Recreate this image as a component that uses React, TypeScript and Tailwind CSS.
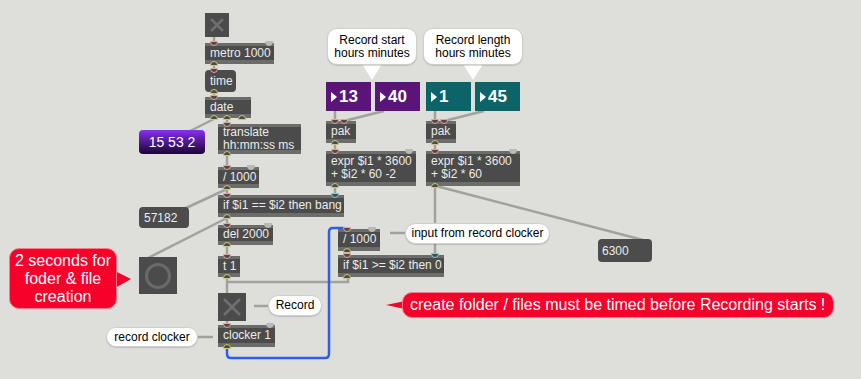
import React from 'react';

// Max patcher view. The canvas is free-form, so the object chains are
// stacked with flex columns and the odd loose nodes are pinned in place.

type Port = { c: string; kind?: 'hot' | 'cold' | 'grey' };

interface ObjProps {
    className: string;
    lines: string[];
    inlets?: Port[];
    outlets?: string[];
    rounded?: boolean;
    strips?: boolean;
}

const inletColor = {
    hot: 'border-[#e3a49c] bg-[#4a4b4a]',
    cold: 'border-[#86c9d3] bg-[#4a4b4a]',
    grey: 'border-[#b9bab8] bg-[#b9bab8]',
};

const Obj: React.FC<ObjProps> = ({ className, lines, inlets = [{ c: 'left-[5px]' }], outlets = ['left-[5px]'], rounded, strips = true }) => (
    <div className={`shrink-0 ${className}`}>
        <div
            className={`w-full h-full bg-[#4a4b4a] flex flex-col justify-center pl-[5px] text-[12px] leading-[13px] text-[#ececec] ${rounded ? 'rounded-[4px]' : ''} ${strips ? 'border-t-[3px] border-b-[4px] border-[#6c6d6b]' : ''}`}
        >
            {lines.map(l => (
                <div key={l} className="whitespace-pre">{l}</div>
            ))}
        </div>
        {inlets.map(p => (
            <div key={p.c} className={`absolute top-[-2px] w-[8px] h-[5px] rounded-b-full border ${inletColor[p.kind || 'hot']} ${p.c}`} />
        ))}
        {outlets.map(o => (
            <div key={o} className={`absolute bottom-[-2px] w-[8px] h-[5px] rounded-t-full border border-[#c9c77e] bg-[#4a4b4a] ${o}`} />
        ))}
    </div>
);

const NumBox: React.FC<{ v: string; teal?: boolean }> = ({ v, teal }) => (
    <div
        className={`w-[45px] h-[29px] flex items-center pl-[5px] gap-[2px] text-white text-[17px] font-bold ${teal ? 'bg-[#0d6468]' : 'bg-[#5b1479]'}`}
    >
        <svg width="6" height="10" viewBox="0 0 6 10"><path d="M0 0 L6 5 L0 10 Z" fill="#ffffff" /></svg>
        <span>{v}</span>
    </div>
);

const Toggle: React.FC<{ className: string; s: number }> = ({ className, s }) => (
    <div className={`shrink-0 bg-[#4a4b4a] ${className}`}>
        <svg width={s} height={s}>
            <path d={`M6 6 L${s - 6} ${s - 6} M${s - 6} 6 L6 ${s - 6}`} stroke="#6f706e" strokeWidth="2.5" />
        </svg>
    </div>
);

const Bubble: React.FC<{ className: string; children: React.ReactNode; pill?: boolean }> = ({ className, children, pill }) => (
    <div
        className={`shrink-0 bg-white border border-[#cfd0cc] shadow-[0_1px_1px_rgba(0,0,0,0.15)] flex flex-col items-center justify-center text-[12px] leading-[13px] text-black ${pill ? 'rounded-full' : 'rounded-[10px]'} ${className}`}
    >
        {children}
    </div>
);

const cables: [number, number][][] = [
    [[214, 37], [214, 43]],
    [[214, 64], [214, 70]],
    [[214, 92], [214, 97]],
    [[227, 118], [227, 124]],
    [[214, 119], [190, 131]],
    [[227, 154], [227, 167]],
    [[227, 188], [227, 195]],
    [[227, 189], [186, 208]],
    [[227, 217], [227, 225]],
    [[227, 218], [148, 258]],
    [[227, 245], [227, 256]],
    [[227, 277], [227, 293]],
    [[348, 277], [348, 282], [227, 282]],
    [[227, 321], [227, 325]],
    [[335, 111], [335, 121]],
    [[384, 111], [344, 121]],
    [[435, 111], [435, 121]],
    [[484, 111], [444, 121]],
    [[335, 143], [335, 151]],
    [[435, 143], [435, 151]],
    [[335, 186], [335, 195]],
    [[435, 186], [435, 255]],
    [[436, 186], [643, 240]],
    [[347, 251], [347, 255]],
    [[254, 306], [268, 306]],
    [[198, 337], [213, 337]],
    [[390, 233], [405, 233]],
];

const App: React.FC = () => {
    return (
        <div className="relative w-[861px] h-[379px] bg-[#dedfda] overflow-hidden font-['Liberation_Sans',Arial,sans-serif]">
            {/* patch cords */}
            <svg className="absolute inset-0" width="861" height="379">
                {cables.map((c, i) => (
                    <polyline
                        key={i}
                        points={c.map(p => p.join(',')).join(' ')}
                        fill="none"
                        stroke="#a1a29e"
                        strokeWidth="2.5"
                    />
                ))}
                <path
                    d="M227 347 L227 354 Q227 358 231 358 L325 358 Q329 358 329 354 L329 232 Q329 228 333 228 L343 228 Q347 228 347 232"
                    fill="none"
                    stroke="#2d5cf0"
                    strokeWidth="2.5"
                />
                {/* comment pointers */}
                <path d="M362 64 L372 80 L382 64 Z" fill="#ffffff" />
                <path d="M463 64 L473 80 L483 64 Z" fill="#ffffff" />
                <path d="M115 271 L131 279 L115 288 Z" fill="#f7002a" />
                <path d="M405 301 L386 305 L405 309 Z" fill="#f7002a" />
            </svg>

            {/* clock chain */}
            <div className="absolute left-[205px] top-[13px] flex flex-col items-start">
                <Toggle className="relative w-[24px] h-[24px]" s={24} />
                <Obj className="relative mt-[6px] w-[69px] h-[21px]" lines={['metro 1000']} inlets={[{ c: 'left-[5px]' }, { c: 'left-[60px]', kind: 'grey' }]} />
                <Obj className="relative mt-[6px] w-[31px] h-[22px]" lines={['time']} rounded strips={false} />
                <Obj className="relative mt-[5px] w-[46px] h-[21px]" lines={['date']} outlets={['left-[5px]', 'left-[18px]', 'left-[33px]']} />
            </div>

            <div className="absolute left-[139px] top-[130px] w-[66px] h-[24px] rounded-[4px] bg-gradient-to-b from-[#8a2ff0] to-[#1c0636] flex items-center justify-center text-white text-[14px]">
                15 53 2
            </div>

            <div className="absolute left-[139px] top-[207px] w-[50px] h-[21px] rounded-[4px] bg-[#4b4c4b] flex items-center pl-[5px] text-[12px] text-[#ececec]">
                57182
            </div>

            {/* bang button */}
            <div className="absolute left-[139px] top-[257px] w-[38px] h-[37px] bg-[#4a4b4a] flex items-center justify-center">
                <div className="w-[26px] h-[26px] rounded-full border-[3px] border-[#6a6b69]" />
            </div>

            <div className="absolute left-[9px] top-[248px] w-[108px] h-[61px] rounded-[10px] bg-[#f7002a] border border-[#ff7a8c] flex flex-col items-center justify-center text-white text-[16px] leading-[18px]">
                <div>2 seconds for</div>
                <div>foder &amp; file</div>
                <div>creation</div>
            </div>

            <Bubble className="absolute left-[106px] top-[327px] w-[92px] h-[20px]" pill>record clocker</Bubble>

            {/* compare / trigger chain */}
            <div className="absolute left-[218px] top-[124px] flex flex-col items-start">
                <Obj className="relative w-[83px] h-[30px]" lines={['translate', 'hh:mm:ss ms']} />
                <Obj className="relative mt-[13px] w-[41px] h-[21px]" lines={['/ 1000']} inlets={[{ c: 'left-[5px]' }, { c: 'left-[29px]', kind: 'grey' }]} />
                <Obj className="relative mt-[7px] w-[126px] h-[22px]" lines={['if $i1 == $i2 then bang']} inlets={[{ c: 'left-[5px]' }, { c: 'left-[113px]', kind: 'cold' }]} />
                <Obj className="relative mt-[8px] w-[55px] h-[20px]" lines={['del 2000']} inlets={[{ c: 'left-[5px]' }, { c: 'left-[46px]', kind: 'grey' }]} />
                <Obj className="relative mt-[11px] w-[22px] h-[21px]" lines={['t 1']} />
                <div className="mt-[16px] flex items-center gap-[22px]">
                    <Toggle className="relative w-[28px] h-[28px]" s={28} />
                    <Bubble className="w-[54px] h-[21px] -mt-[3px]" pill>Record</Bubble>
                </div>
                <Obj className="relative mt-[4px] w-[57px] h-[22px]" lines={['clocker 1']} inlets={[{ c: 'left-[5px]' }, { c: 'left-[48px]', kind: 'grey' }]} />
            </div>

            {/* record start */}
            <div className="absolute left-[326px] top-[28px] flex flex-col items-start">
                <Bubble className="ml-[1px] w-[90px] h-[37px]">
                    <div>Record start</div>
                    <div>hours minutes</div>
                </Bubble>
                <div className="mt-[17px] flex gap-[4px]">
                    <NumBox v="13" />
                    <NumBox v="40" />
                </div>
                <Obj className="relative mt-[10px] w-[30px] h-[22px]" lines={['pak']} inlets={[{ c: 'left-[5px]' }, { c: 'left-[14px]' }]} />
                <Obj className="relative mt-[8px] w-[90px] h-[35px]" lines={['expr $i1 * 3600', '+ $i2 * 60 -2']} inlets={[{ c: 'left-[5px]' }, { c: 'left-[79px]', kind: 'grey' }]} />
            </div>

            {/* record length */}
            <div className="absolute left-[423px] top-[28px] flex flex-col items-start">
                <Bubble className="w-[100px] h-[37px]">
                    <div>Record length</div>
                    <div>hours minutes</div>
                </Bubble>
                <div className="mt-[17px] ml-[3px] flex gap-[4px]">
                    <NumBox v="1" teal />
                    <NumBox v="45" teal />
                </div>
                <Obj className="relative mt-[10px] ml-[3px] w-[30px] h-[22px]" lines={['pak']} inlets={[{ c: 'left-[5px]' }, { c: 'left-[14px]' }]} />
                <Obj className="relative mt-[8px] ml-[3px] w-[94px] h-[35px]" lines={['expr $i1 * 3600', '+ $i2 * 60']} inlets={[{ c: 'left-[5px]' }, { c: 'left-[83px]', kind: 'grey' }]} />
            </div>

            {/* recording stop */}
            <div className="absolute left-[338px] top-[229px] flex flex-col items-start gap-[4px]">
                <Obj className="relative w-[42px] h-[22px]" lines={['/ 1000']} inlets={[{ c: 'left-[5px]' }, { c: 'left-[30px]', kind: 'grey' }]} />
                <Obj className="relative w-[106px] h-[22px]" lines={['if $i1 >= $i2 then 0']} inlets={[{ c: 'left-[5px]' }, { c: 'left-[93px]', kind: 'cold' }]} />
            </div>
            <Bubble className="absolute left-[405px] top-[223px] w-[145px] h-[21px]" pill>input from record clocker</Bubble>

            <div className="absolute left-[598px] top-[239px] w-[54px] h-[23px] rounded-[4px] bg-[#4b4c4b] flex items-center pl-[4px] text-[12px] text-[#ececec]">
                6300
            </div>

            <div className="absolute left-[402px] top-[292px] w-[432px] h-[26px] rounded-[10px] bg-[#f7002a] border border-[#ff7a8c] flex items-center pl-[7px] text-white text-[16px] whitespace-nowrap">
                create folder / files must be timed before Recording starts !
            </div>
        </div>
    );
};

export default App;
